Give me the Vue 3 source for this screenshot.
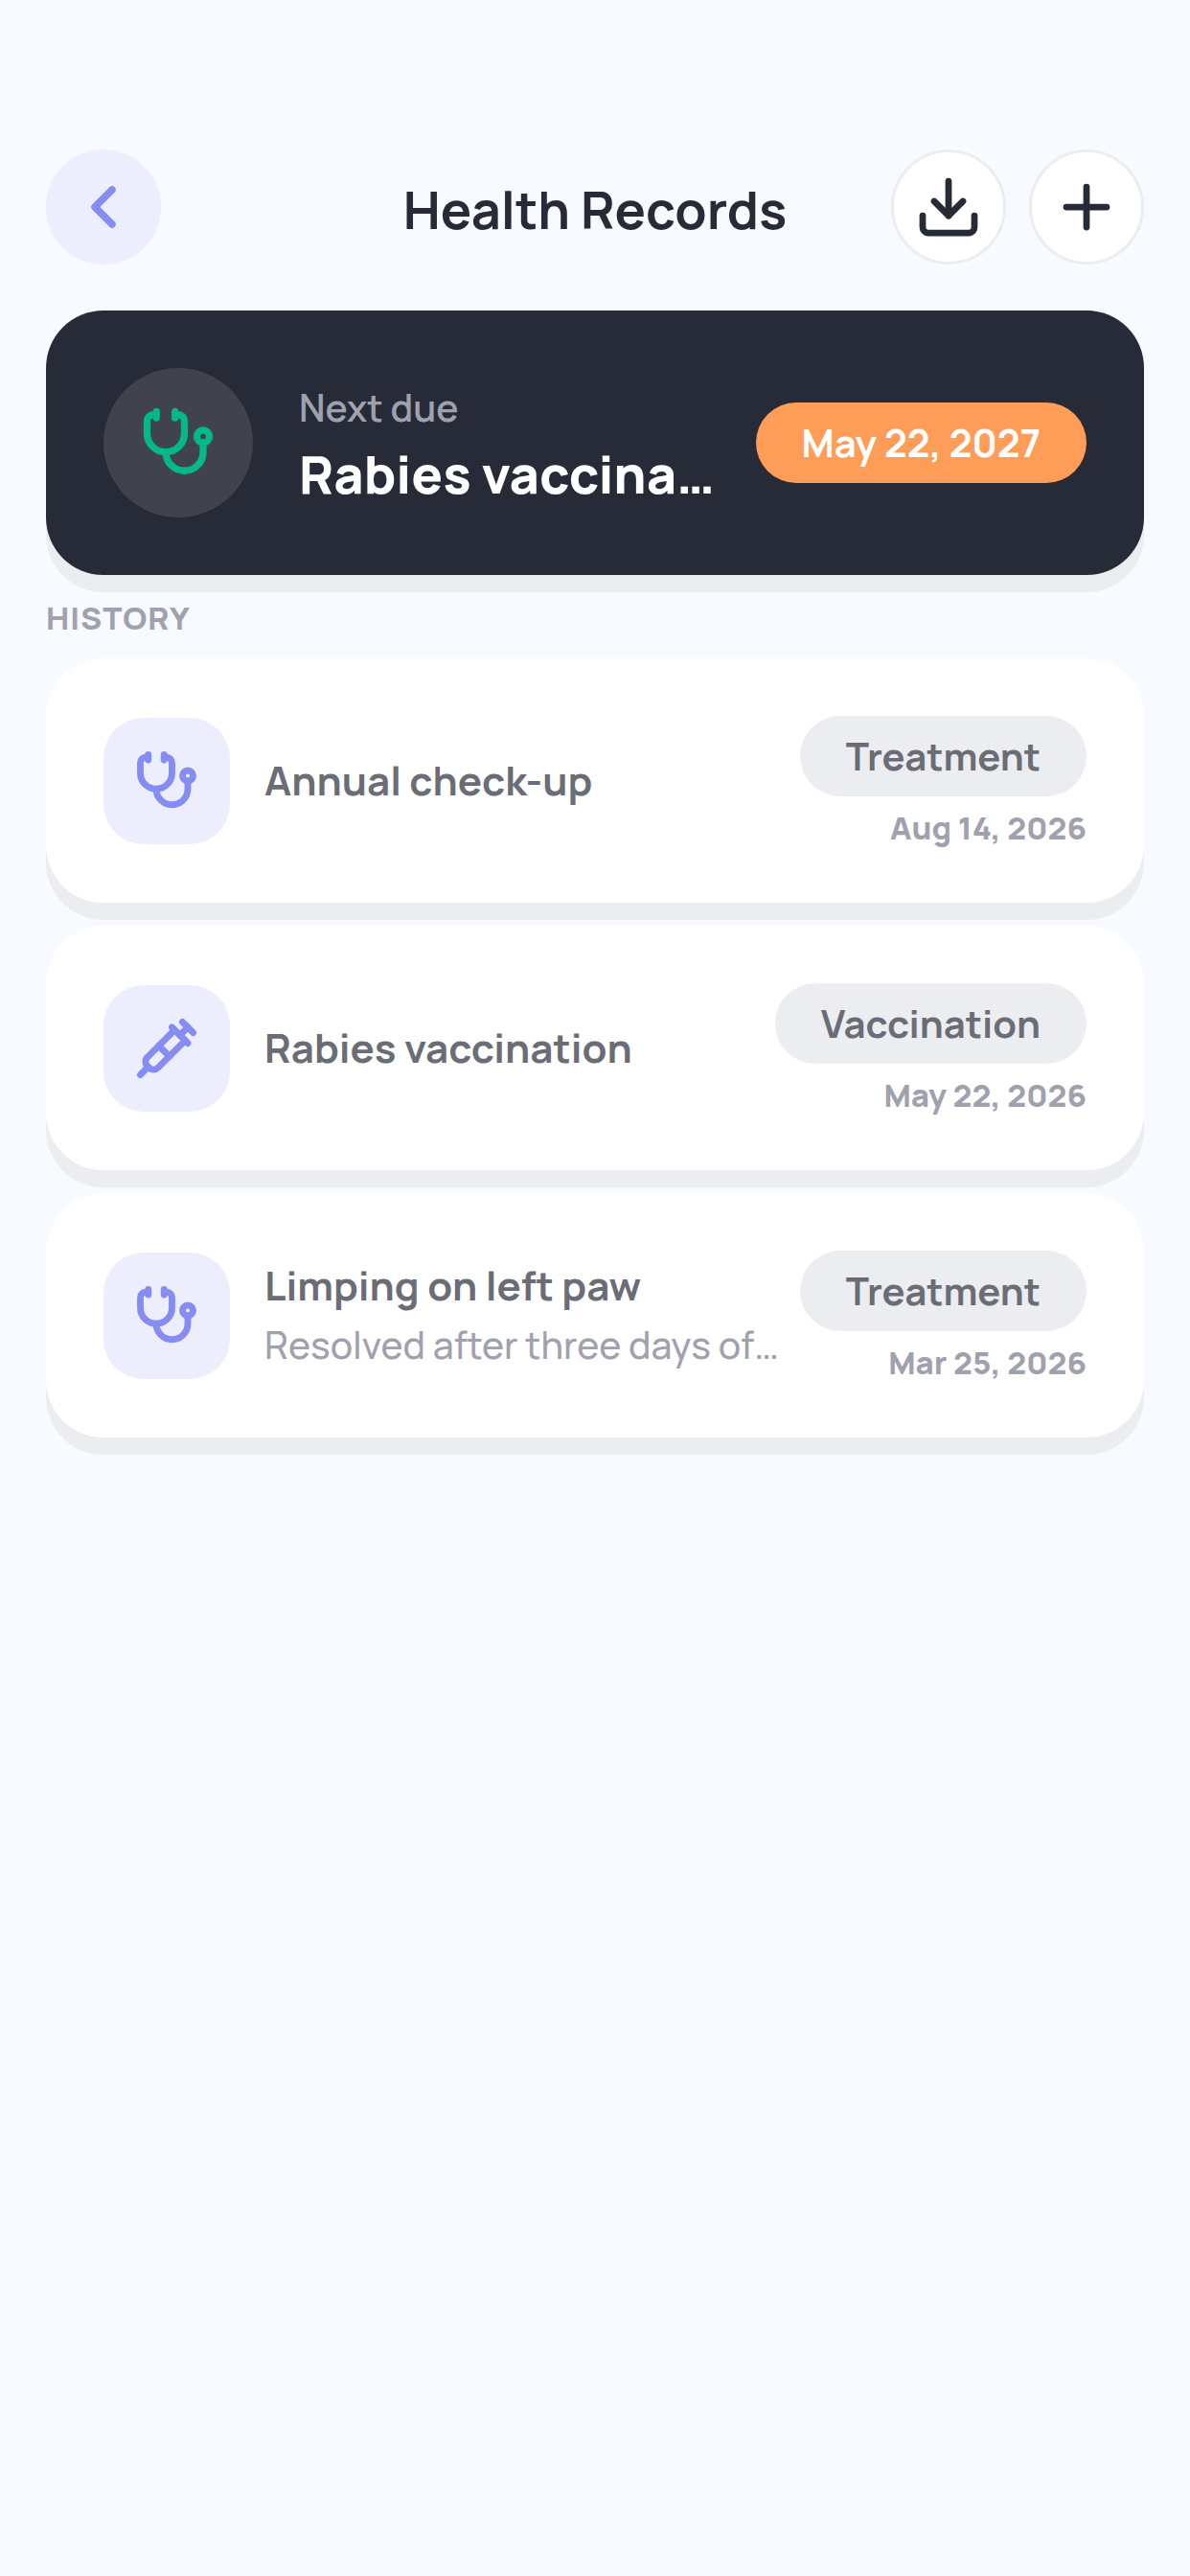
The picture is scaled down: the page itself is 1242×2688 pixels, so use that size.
<template>
  <main class="records">
    <header class="records__header">
      <button type="button" class="icon-button icon-button--soft" aria-label="Back">
        <svg class="icon-button__icon icon-button__icon--back" viewBox="0 0 24 24" aria-hidden="true">
          <path d="m15 18-6-6 6-6" />
        </svg>
      </button>

      <h1 class="records__title">Health Records</h1>

      <div class="records__actions">
        <button type="button" class="icon-button" aria-label="Download">
          <svg class="icon-button__icon" viewBox="0 0 24 24" aria-hidden="true">
            <path d="M21 15v4a2 2 0 0 1-2 2H5a2 2 0 0 1-2-2v-4" />
            <path d="m7 10 5 5 5-5" />
            <path d="M12 15V3" />
          </svg>
        </button>
        <button type="button" class="icon-button" aria-label="Add record">
          <svg class="icon-button__icon" viewBox="0 0 24 24" aria-hidden="true">
            <path d="M5 12h14" />
            <path d="M12 5v14" />
          </svg>
        </button>
      </div>
    </header>

    <!-- Next due -->
    <section class="next-due">
      <div class="next-due__badge">
        <svg class="next-due__icon" viewBox="0 0 24 24" aria-hidden="true">
          <path v-for="d in icons.stethoscope" :key="d" :d="d" />
        </svg>
      </div>
      <div class="next-due__body">
        <p class="next-due__label">Next due</p>
        <p class="next-due__name">{{ nextDue.name }}</p>
      </div>
      <span class="pill pill--accent">{{ nextDue.date }}</span>
    </section>

    <!-- History -->
    <h2 class="records__section">HISTORY</h2>
    <ul class="history">
      <li v-for="record in history" :key="record.id" class="record">
        <div class="record__badge">
          <svg class="record__icon" viewBox="0 0 24 24" aria-hidden="true">
            <path v-for="d in icons[record.icon]" :key="d" :d="d" />
          </svg>
        </div>
        <div class="record__body">
          <p class="record__name">{{ record.name }}</p>
          <p v-if="record.note" class="record__note">{{ record.note }}</p>
        </div>
        <div class="record__meta">
          <span class="pill">{{ record.type }}</span>
          <span class="record__date">{{ record.date }}</span>
        </div>
      </li>
    </ul>
  </main>
</template>

<script setup>
import { ref } from 'vue';

const icons = {
  stethoscope: [
    'M11 2v2',
    'M5 2v2',
    'M5 3H4a2 2 0 0 0-2 2v4a6 6 0 0 0 12 0V5a2 2 0 0 0-2-2h-1',
    'M8 15a6 6 0 0 0 12 0v-3',
    'M22 10a2 2 0 1 1-4 0a2 2 0 1 1 4 0'
  ],
  syringe: [
    'm18 2 4 4',
    'm17 7 3-3',
    'M19 9 8.7 19.3c-1 1-2.5 1-3.4 0l-.6-.6c-1-1-1-2.5 0-3.4L15 5',
    'm9 11 4 4',
    'm5 19-3 3',
    'm14 4 6 6'
  ]
};

const nextDue = ref({ name: 'Rabies vaccination', date: 'May 22, 2027' });

const history = ref([
  { id: 1, icon: 'stethoscope', name: 'Annual check-up', type: 'Treatment', date: 'Aug 14, 2026' },
  { id: 2, icon: 'syringe', name: 'Rabies vaccination', type: 'Vaccination', date: 'May 22, 2026' },
  {
    id: 3,
    icon: 'stethoscope',
    name: 'Limping on left paw',
    note: 'Resolved after three days of rest',
    type: 'Treatment',
    date: 'Mar 25, 2026'
  }
]);
</script>

<style>
body {
  margin: 0;
  background: #f7faff;
}
</style>

<style scoped>
.records {
  box-sizing: border-box;
  padding: 156px 48px 48px;
  font-family: Manrope, Inter, sans-serif;
  color: #272a37;
}

.records h1,
.records h2,
.records p,
.records ul {
  margin: 0;
  padding: 0;
}

svg {
  display: block;
  fill: none;
  stroke: currentColor;
  stroke-linecap: round;
  stroke-linejoin: round;
}

/* Header */
.records__header {
  display: grid;
  grid-template-columns: 1fr auto 1fr;
  align-items: center;
  margin-bottom: 48px;
}

.records .records__title {
  padding-top: 3px;
  font-size: 54px;
  font-weight: 700;
  line-height: 72px;
}

.records__actions {
  display: flex;
  justify-content: flex-end;
  gap: 24px;
}

.icon-button {
  box-sizing: border-box;
  display: flex;
  align-items: center;
  justify-content: center;
  width: 120px;
  height: 120px;
  padding: 0;
  border: 3px solid #ecedf1;
  border-radius: 50%;
  background: #ffffff;
  color: #272a37;
  cursor: pointer;
}

.icon-button--soft {
  border-color: #ecedfd;
  background: #ecedfd;
  color: #858df2;
}

.icon-button__icon {
  width: 72px;
  height: 72px;
  stroke-width: 2.25;
}

.icon-button__icon--back {
  stroke-width: 2.5;
}

/* Next due card */
.next-due {
  display: flex;
  align-items: center;
  padding: 60px;
  border-radius: 60px;
  background: #272a37;
  box-shadow: 0 18px 0 #ecedf1;
}

.next-due__badge {
  display: flex;
  flex-shrink: 0;
  align-items: center;
  justify-content: center;
  width: 156px;
  height: 156px;
  margin-right: 48px;
  border-radius: 50%;
  background: #40434e;
  color: #05b888;
}

.next-due__icon {
  width: 78px;
  height: 78px;
  stroke-width: 2.25;
}

.next-due__body {
  display: flex;
  flex: 1;
  flex-direction: column;
  gap: 6px;
  min-width: 0;
  margin-right: 36px;
  padding-bottom: 3px;
}

.next-due__label {
  font-size: 39px;
  font-weight: 600;
  line-height: 60px;
  color: #9fa2ae;
}

.next-due__name {
  overflow: hidden;
  font-size: 54px;
  font-weight: 800;
  line-height: 66px;
  color: #ffffff;
  text-overflow: ellipsis;
  white-space: nowrap;
}

/* Pill */
.pill {
  flex-shrink: 0;
  padding: 0 48px;
  border-radius: 42px;
  background: #ecedf1;
  font-size: 40px;
  font-weight: 700;
  line-height: 84px;
  color: #6a6d76;
  white-space: nowrap;
}

.pill--accent {
  background: #fe9d58;
  color: #ffffff;
}

/* History */
.records .records__section {
  margin: 24px 0 21px;
  font-size: 33px;
  font-weight: 800;
  line-height: 42px;
  letter-spacing: 1px;
  color: #9fa2ae;
}

.history {
  display: flex;
  flex-direction: column;
  gap: 24px;
  list-style: none;
}

.record {
  display: flex;
  align-items: center;
  padding: 60px;
  border-radius: 60px;
  background: #ffffff;
  box-shadow: 0 18px 0 #ecedf1;
}

.record__badge {
  display: flex;
  flex-shrink: 0;
  align-items: center;
  justify-content: center;
  width: 132px;
  height: 132px;
  margin-right: 36px;
  border-radius: 42px;
  background: #ecedfd;
  color: #858df2;
}

.record__icon {
  width: 66px;
  height: 66px;
  stroke-width: 2.5;
}

.record__body {
  display: flex;
  flex: 1;
  flex-direction: column;
  gap: 7px;
  min-width: 0;
  margin-right: 18px;
  padding-bottom: 2px;
}

.record__name {
  font-size: 42px;
  font-weight: 700;
  line-height: 56px;
  color: #6a6d76;
}

.record__note {
  overflow: hidden;
  font-size: 39px;
  font-weight: 500;
  line-height: 54px;
  color: #9fa2ae;
  text-overflow: ellipsis;
  white-space: nowrap;
}

.record__meta {
  display: flex;
  flex-shrink: 0;
  flex-direction: column;
  align-items: flex-end;
  gap: 15px;
}

.record__date {
  font-size: 33px;
  font-weight: 800;
  line-height: 36px;
  color: #9fa2ae;
}
</style>
